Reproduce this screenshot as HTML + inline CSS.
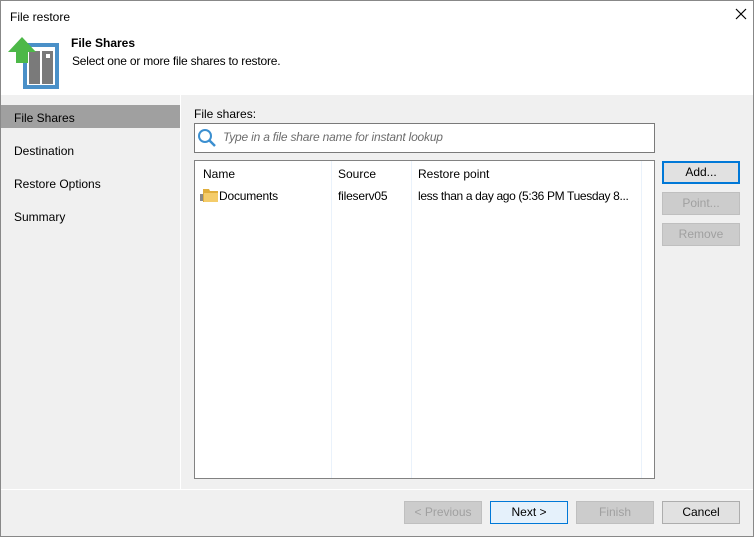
<!DOCTYPE html>
<html><head><style>
*{margin:0;padding:0;box-sizing:border-box}
body{width:754px;height:537px;font-family:"Liberation Sans",sans-serif;font-size:12px;color:#000;background:#f0f0f0;position:relative;overflow:hidden}
.win{position:absolute;left:0;top:0;width:754px;height:537px;border:1px solid #888;background:#f0f0f0}
.abs{position:absolute;white-space:nowrap}
.btn{position:absolute;height:23px;width:78px;border:1px solid #adadad;background:#e1e1e1;text-align:center;line-height:21px;font-size:12px}
.dis{color:#a0a0a0;background:#cccccc;border-color:#bfbfbf}
.t{letter-spacing:-0.2px}
</style></head><body>
<div class="win">
<div class="abs" style="left:0;top:0;width:752px;height:94px;background:#fff"></div>
<div class="abs" style="left:9px;top:9px">File restore</div>
<svg class="abs" style="left:734px;top:7px" width="12" height="12"><path d="M1 1L11 11M11 1L1 11" stroke="#000" stroke-width="1.2"/></svg>
<svg class="abs" style="left:5px;top:34px" width="56" height="56">
<rect x="17" y="8" width="36" height="46" fill="#4a90c8"/>
<rect x="21" y="12" width="28" height="38" fill="#fff"/>
<rect x="23" y="16" width="11" height="33" fill="#7a7a7a"/>
<rect x="36" y="16" width="11" height="33" fill="#7a7a7a"/>
<rect x="40" y="19" width="4" height="4" fill="#fff"/>
<polygon points="16,2 2,17 10,17 10,28 22,28 22,17 30,17" fill="#4db848"/>
</svg>
<div class="abs" style="left:70px;top:35px;font-weight:bold">File Shares</div>
<div class="abs t" style="left:71px;top:53px">Select one or more file shares to restore.</div>
<div class="abs" style="left:179px;top:94px;width:1px;height:395px;background:#fff"></div>
<div class="abs" style="left:0;top:104px;width:179px;height:23px;background:#a0a0a0"></div>
<div class="abs" style="left:13px;top:110px">File Shares</div>
<div class="abs" style="left:13px;top:143px">Destination</div>
<div class="abs" style="left:13px;top:176px">Restore Options</div>
<div class="abs" style="left:13px;top:209px">Summary</div>
<div class="abs" style="left:193px;top:106px">File shares:</div>
<div class="abs" style="left:193px;top:122px;width:461px;height:30px;border:1px solid #7a7a7a;background:#fff"></div>
<svg class="abs" style="left:196px;top:127px" width="20" height="20"><circle cx="8" cy="8" r="6" fill="none" stroke="#3b8fd0" stroke-width="2"/><line x1="12.5" y1="12.5" x2="18" y2="18" stroke="#3b8fd0" stroke-width="2.5"/></svg>
<div class="abs t" style="left:222px;top:129px;color:#6d6d6d;font-style:italic">Type in a file share name for instant lookup</div>
<div class="abs" style="left:193px;top:159px;width:461px;height:319px;border:1px solid #828282;background:#fff"></div>
<div class="abs" style="left:330px;top:160px;width:1px;height:317px;background:#eaf2fb"></div>
<div class="abs" style="left:410px;top:160px;width:1px;height:317px;background:#eaf2fb"></div>
<div class="abs" style="left:640px;top:160px;width:1px;height:317px;background:#eaf2fb"></div>
<div class="abs" style="left:202px;top:166px">Name</div>
<div class="abs" style="left:337px;top:166px">Source</div>
<div class="abs" style="left:417px;top:166px">Restore point</div>
<svg class="abs" style="left:199px;top:185px" width="19" height="17"><rect x="0" y="8" width="3" height="7" fill="#888"/><path d="M3 3h6l1 2h8v11H3z" fill="#e0ae3c"/><path d="M4 7h14v9H4z" fill="#f4cc6a"/></svg>
<div class="abs t" style="left:218px;top:188px">Documents</div>
<div class="abs t" style="left:337px;top:188px">fileserv05</div>
<div class="abs t" style="left:417px;top:188px;letter-spacing:-0.35px">less than a day ago (5:36 PM Tuesday 8...</div>
<div class="btn" style="left:661px;top:160px;border:2px solid #0078d7;line-height:19px">Add...</div>
<div class="btn dis" style="left:661px;top:191px">Point...</div>
<div class="btn dis" style="left:661px;top:222px">Remove</div>
<div class="abs" style="left:0;top:488px;width:752px;height:1px;background:#fff"></div>
<div class="btn dis" style="left:403px;top:500px">&lt; Previous</div>
<div class="btn" style="left:489px;top:500px;background:#e5f1fb;border-color:#0078d7">Next &gt;</div>
<div class="btn dis" style="left:575px;top:500px">Finish</div>
<div class="btn" style="left:661px;top:500px">Cancel</div>
</div>
</body></html>
